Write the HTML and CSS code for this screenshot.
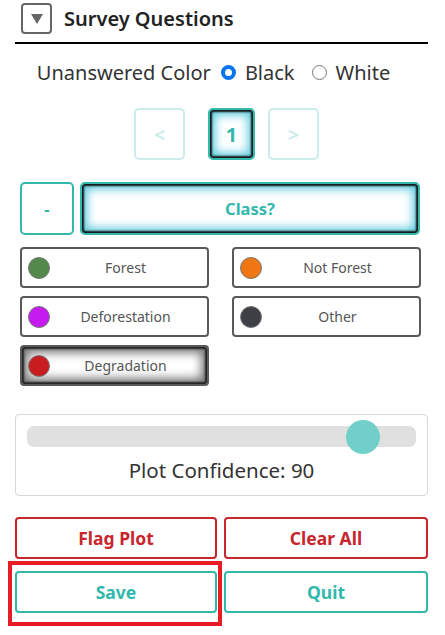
FILE: index.html
```html
<!DOCTYPE html>
<html>
<head>
<meta charset="utf-8">
<link rel="stylesheet" href="styles.css">
</head>
<body>
<div class="panel">
  <div class="header">
    <span class="toggle"><svg width="14" height="12" viewBox="0 0 14 12"><path d="M1 1 H13 L7 11 Z" fill="#666"/></svg></span>
    <span class="title">Survey Questions</span>
  </div>
  <div class="colorrow">
    <span class="label">Unanswered Color</span>
    <span class="radio checked"></span><span class="opt">Black</span>
    <span class="radio"></span><span class="opt">White</span>
  </div>
  <div class="pager">
    <button class="pbtn disabled">&lt;</button>
    <button class="pbtn current">1</button>
    <button class="pbtn disabled">&gt;</button>
  </div>
  <div class="classrow">
    <button class="tbtn minus">-</button>
    <button class="tbtn question">Class?</button>
  </div>
  <div class="answers">
    <button class="ans"><span class="dot" style="background:#538a4b"></span><span class="atext">Forest</span></button>
    <button class="ans"><span class="dot" style="background:#f07614"></span><span class="atext">Not Forest</span></button>
    <button class="ans"><span class="dot" style="background:#c51af0"></span><span class="atext">Deforestation</span></button>
    <button class="ans"><span class="dot" style="background:#3f4046"></span><span class="atext">Other</span></button>
    <button class="ans selected"><span class="dot" style="background:#c81c1f"></span><span class="atext">Degradation</span></button>
  </div>
  <div class="card">
    <div class="track"><span class="thumb" style="left:calc(17px + 0.9 * (100% - 34px))"></span></div>
    <div class="conf">Plot Confidence: 90</div>
  </div>
  <div class="actions">
    <button class="abtn red">Flag Plot</button>
    <button class="abtn red">Clear All</button>
    <button class="abtn teal">Save</button>
    <button class="abtn teal">Quit</button>
  </div>
</div>
<div class="highlight"></div>
</body>
</html>
```
FILE: styles.css
```css
* { box-sizing: border-box; }
body {
  margin: 0;
  background: #fff;
  font-family: "Noto Sans", "Open Sans", sans-serif;
  color: #333;
}
button { font-family: inherit; background: #fff; cursor: pointer; padding: 0; }
.panel { width: 445px; padding: 0 17px 0 15px; }
.header {
  height: 44px;
  display: flex;
  align-items: center;
  border-bottom: 2px solid #000;
  padding-bottom: 6px;
}
.toggle {
  width: 31px; height: 31px;
  margin-left: 6px;
  border: 2px solid #666;
  border-radius: 4px;
  display: flex; align-items: center; justify-content: center;
  padding-top: 2px;
}
.title { margin-left: 12px; font-size: 20px; font-weight: 600; color: #222; }
.colorrow {
  display: flex; align-items: center; justify-content: center;
  height: 56px; font-size: 20px; color: #333;
  padding-right: 16px;
}
.label { margin-right: 10px; }
.radio {
  width: 15px; height: 15px; border-radius: 50%;
  border: 1px solid #777; display: inline-block; margin-right: 9px;
}
.radio.checked { border: 4px solid #0b75f0; background: #fff; }
.opt { margin-right: 17px; }
.opt:last-child { margin-right: 0; }
.pager { display: flex; justify-content: center; margin-top: 8px; padding-left: 10px; }
.pbtn {
  width: 51px; height: 52px; border: 2px solid #31b9ad; border-radius: 5px;
  font-size: 20px; font-weight: 700; color: #31b9ad;
}
.pbtn.disabled { opacity: 0.25; }
.pbtn.current {
  width: 47px; margin: 0 13px 0 23px;
  box-shadow: inset 0 0 2px 2px #111, inset 0 0 10px 5px #5ccbdf;
}
.classrow { display: flex; margin-top: 22px; padding: 0 8px 0 5px; gap: 6px; }
.tbtn {
  height: 53px; border: 2px solid #31b9ad; border-radius: 5px;
  color: #31b9ad; font-size: 16.5px; font-weight: 700;
}
.minus { width: 54px; }
.question {
  flex: 1;
  box-shadow: inset 0 0 2px 2px #111, inset 0 0 10px 5px #5ccbdf;
}
.answers {
  display: grid; grid-template-columns: 189px 189px; column-gap: 23px; row-gap: 8px;
  margin-top: 12px; padding-left: 5px;
}
.ans {
  height: 41px; border: 2px solid #5a5a5a; border-radius: 4px;
  display: flex; align-items: center; padding: 0 6px;
  font-size: 14px; color: #555; position: relative;
}
.dot { width: 22px; height: 22px; border-radius: 50%; border: 1px solid #777; flex: none; }
.atext { flex: 1; text-align: center; }
.ans.selected { box-shadow: inset 0 0 2px 2px #222, inset 0 0 10px 6px #7a7a7a; }
.card {
  margin-top: 28px; height: 82px; border: 1px solid #d5d8dc; border-radius: 4px;
  padding: 11px 11px 0 11px;
}
.track { height: 21px; background: #e0e0e0; border-radius: 7px; position: relative; }
.thumb {
  position: absolute; top: -6px; width: 34px; height: 34px; border-radius: 50%;
  background: #70cfc8; transform: translateX(-50%);
}
.conf { text-align: center; font-size: 20.5px; color: #333; margin-top: 9px; }
.actions {
  display: grid; grid-template-columns: 202px 204px; column-gap: 7px; row-gap: 12px;
  margin-top: 21px;
}
.abtn {
  height: 42px; border-radius: 4px; border: 2px solid; font-size: 17.5px; font-weight: 700;
}
.abtn.red { border-color: #c9252c; color: #c9252c; }
.abtn.teal { border-color: #31b9ad; color: #31b9ad; }
.highlight {
  position: absolute; left: 8px; top: 561px; width: 214px; height: 65px;
  border: 4px solid #e81c24;
}
```
